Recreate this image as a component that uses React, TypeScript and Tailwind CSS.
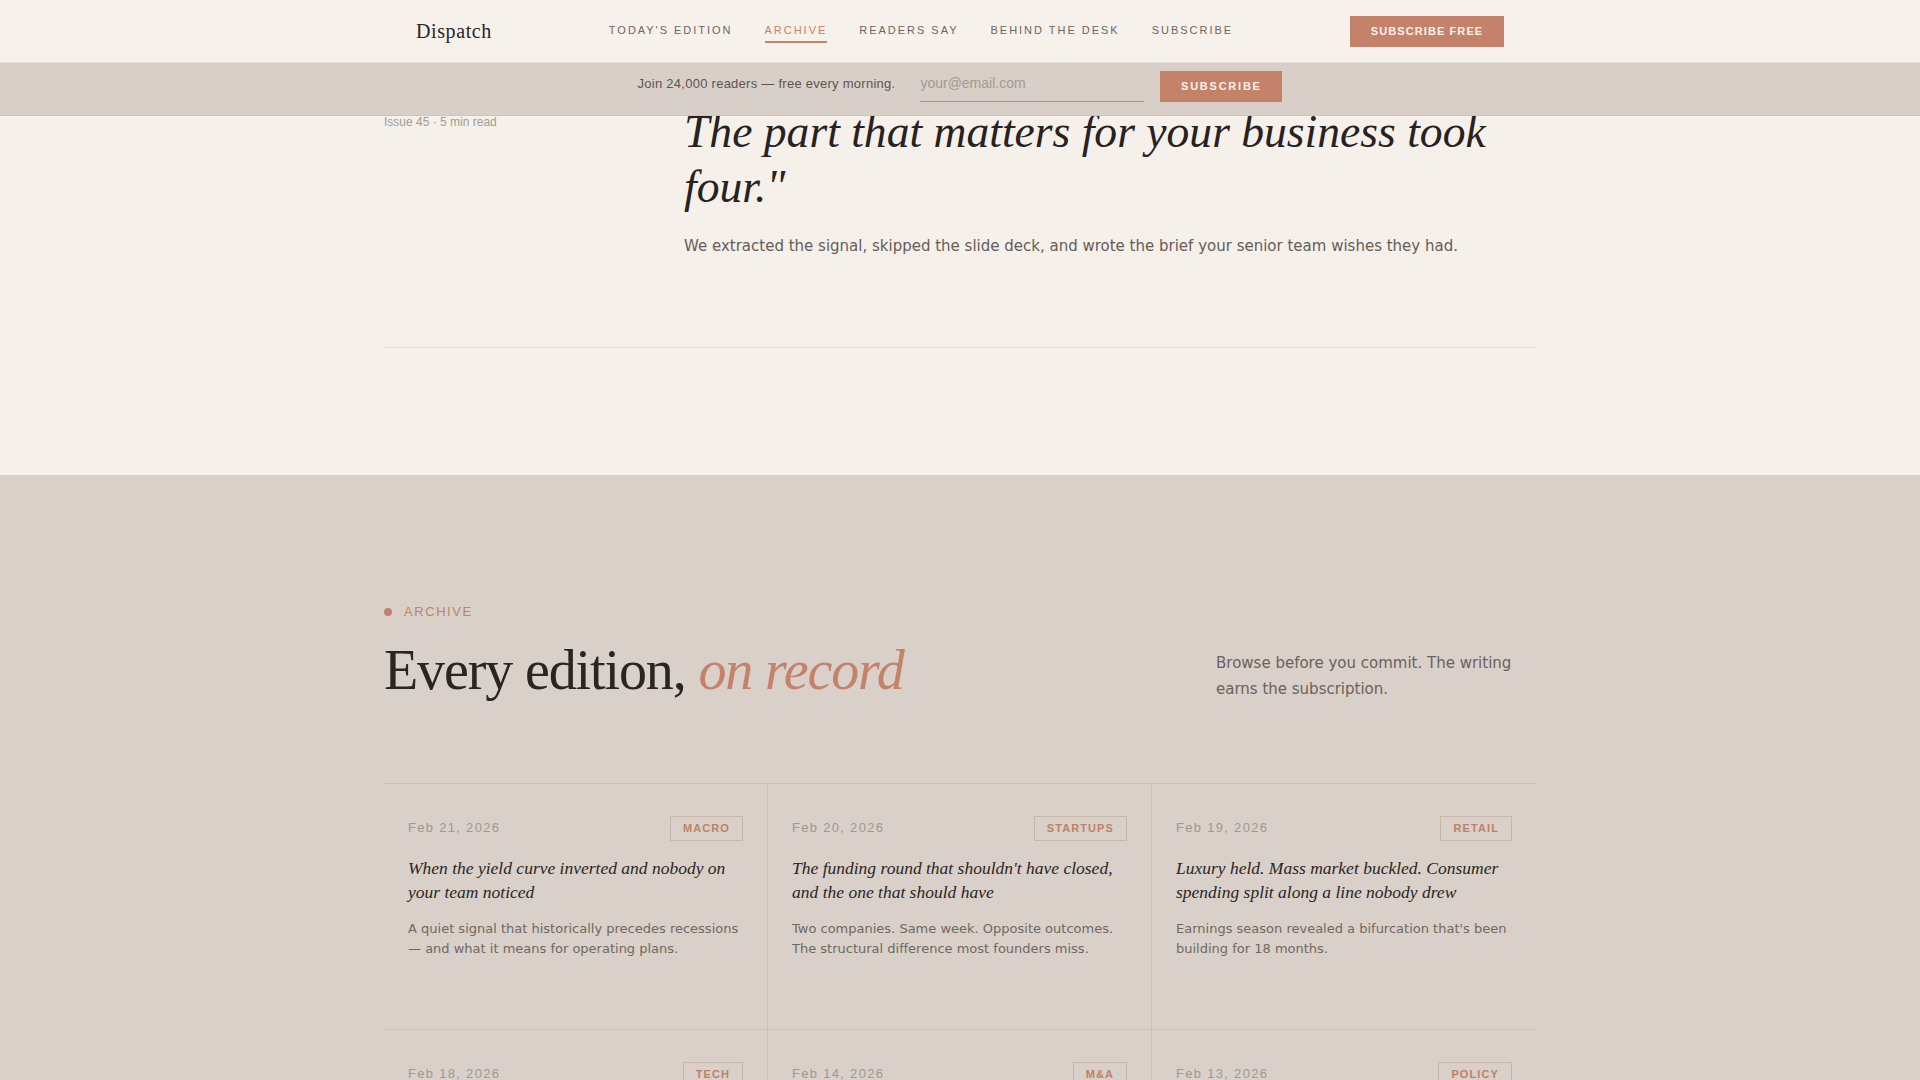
import React from "react";

const serif = "font-['Liberation_Serif',_'Times_New_Roman',_serif]";
const sans = "font-['Liberation_Sans',_Arial,_sans-serif]";
const body = "font-['DejaVu_Sans',_'Noto_Sans',_sans-serif]";

const navItems = [
  { label: "TODAY'S EDITION", active: false },
  { label: "ARCHIVE", active: true },
  { label: "READERS SAY", active: false },
  { label: "BEHIND THE DESK", active: false },
  { label: "SUBSCRIBE", active: false },
];

type Edition = {
  date: string;
  tag: string;
  title: string;
  summary: string;
};

const editions: Edition[] = [
  {
    date: "Feb 21, 2026",
    tag: "MACRO",
    title: "When the yield curve inverted and nobody on your team noticed",
    summary:
      "A quiet signal that historically precedes recessions — and what it means for operating plans.",
  },
  {
    date: "Feb 20, 2026",
    tag: "STARTUPS",
    title: "The funding round that shouldn't have closed, and the one that should have",
    summary:
      "Two companies. Same week. Opposite outcomes. The structural difference most founders miss.",
  },
  {
    date: "Feb 19, 2026",
    tag: "RETAIL",
    title: "Luxury held. Mass market buckled. Consumer spending split along a line nobody drew",
    summary: "Earnings season revealed a bifurcation that's been building for 18 months.",
  },
  {
    date: "Feb 18, 2026",
    tag: "TECH",
    title: "The chip export rule that quietly rewrote your cloud bill",
    summary: "Compute costs are moving, and most budgets haven't caught up to why.",
  },
  {
    date: "Feb 14, 2026",
    tag: "M&A",
    title: "Three deals, one pattern: why acquirers are paying for distribution",
    summary: "The premium isn't for the product anymore. It's for the customer list.",
  },
  {
    date: "Feb 13, 2026",
    tag: "POLICY",
    title: "What the new disclosure rules actually require — and when",
    summary: "A plain reading of the fine print, with the dates your legal team will ask about.",
  },
];

function Header() {
  return (
    <div className="fixed inset-x-0 top-0 z-20">
      <header className="h-[63px] border-b border-[#e6dfd7] bg-[#f6f1eb]">
        <div className="mx-auto flex h-full max-w-[1152px] items-center justify-between px-8">
          <a className={`${serif} text-[20px] tracking-[0.03em] text-[#2a2522]`}>Dispatch</a>
          <nav className="mt-[2px] flex items-center gap-8">
            {navItems.map((item) => (
              <a
                key={item.label}
                className={`${sans} border-b-2 pb-[3px] text-[11px] leading-4 tracking-[0.18em] ${
                  item.active
                    ? "border-[#c4826a] text-[#c4826a]"
                    : "border-transparent text-[#6e655e]"
                }`}
              >
                {item.label}
              </a>
            ))}
          </nav>
          <button
            className={`${sans} h-[31px] w-[154px] bg-[#c4826a] text-[11px] font-bold tracking-[0.1em] text-[#fbf3ea]`}
          >
            SUBSCRIBE FREE
          </button>
        </div>
      </header>
      <div className="flex h-[53px] items-start justify-center gap-4 border-b border-[#cdc4bc] bg-[#d7cfc8] pt-2">
        <span className={`${sans} mr-[9px] mt-[3px] text-[13px] leading-5 tracking-[0.02em] text-[#5d554f]`}>
          Join 24,000 readers — free every morning.
        </span>
        <input
          type="email"
          placeholder="your@email.com"
          className={`${sans} h-[31px] w-[224px] border-b border-[#9f968e] bg-transparent pb-[6px] text-[14px] text-[#3a332e] outline-none placeholder:text-[#a39a92]`}
        />
        <button
          className={`${sans} h-[31px] w-[122px] bg-[#c4826a] text-[11px] font-bold tracking-[0.16em] text-[#fbf3ea]`}
        >
          SUBSCRIBE
        </button>
      </div>
    </div>
  );
}

function Hero() {
  return (
    <section className="bg-[#f5f0ea] pt-[104px]">
      <div className="mx-auto max-w-[1152px]">
        <div className="grid grid-cols-[300px_1fr] border-b border-[#e3ddd6] pb-[89px]">
          <div className={`${sans} mt-[10px] text-[12px] leading-4 text-[#a39b94]`}>
            Issue 45 · 5 min read
          </div>
          <div>
            <h1 className={`${serif} text-[45.6px] italic leading-[55px] text-[#27221f]`}>
              The part that matters for your business took four."
            </h1>
            <p className={`${body} mt-[20px] text-[15px] leading-6 text-[#655d57]`}>
              We extracted the signal, skipped the slide deck, and wrote the brief your senior team
              wishes they had.
            </p>
          </div>
        </div>
        <div className="h-[127px]" />
      </div>
    </section>
  );
}

function EditionCard({ edition, index }: { edition: Edition; index: number }) {
  const lastInRow = index % 3 === 2;
  return (
    <article
      className={`min-h-[246px] border-b border-[#c9c0b8] px-6 pt-8 pb-[68px] ${
        lastInRow ? "" : "border-r"
      }`}
    >
      <div className="flex items-center justify-between">
        <span className={`${sans} text-[13px] tracking-[0.1em] text-[#a1988f]`}>{edition.date}</span>
        <span
          className={`${sans} border border-[#c8b6a8] px-3 py-1 text-[11px] font-bold leading-[15px] tracking-[0.1em] text-[#c27f67]`}
        >
          {edition.tag}
        </span>
      </div>
      <h3 className={`${serif} mt-[15px] text-[17.5px] italic leading-[24.5px] text-[#2b2522]`}>
        {edition.title}
      </h3>
      <p className={`${body} mt-[14px] text-[13px] leading-[1.6] text-[#716861]`}>{edition.summary}</p>
    </article>
  );
}

function Archive() {
  return (
    <section className="bg-[#d8d0c9] pt-[127px] pb-32">
      <div className="mx-auto max-w-[1152px]">
        <div className="flex items-end justify-between">
          <div>
            <div className="flex h-5 items-center gap-3">
              <span className="h-2 w-2 rounded-full bg-[#c4826a]" />
              <span className={`${sans} text-[13px] tracking-[0.12em] text-[#c4826a]`}>ARCHIVE</span>
            </div>
            <h2
              className={`${serif} mt-[18px] text-[56px] leading-[1.1] tracking-[-0.02em] text-[#2a2522]`}
            >
              Every edition, <em className="text-[#c4826a]">on record</em>
            </h2>
          </div>
          <p className={`${body} mb-0 w-[320px] text-[15px] leading-[26px] text-[#6a625c]`}>
            Browse before you commit. The writing earns the subscription.
          </p>
        </div>
        <div className="mt-[81px] grid grid-cols-3 border-t border-[#c9c0b8]">
          {editions.map((edition, i) => (
            <EditionCard key={edition.date} edition={edition} index={i} />
          ))}
        </div>
      </div>
    </section>
  );
}

export default function App() {
  return (
    <div className="min-h-screen bg-[#f5f0ea]">
      <Header />
      <main>
        <Hero />
        <Archive />
      </main>
    </div>
  );
}
